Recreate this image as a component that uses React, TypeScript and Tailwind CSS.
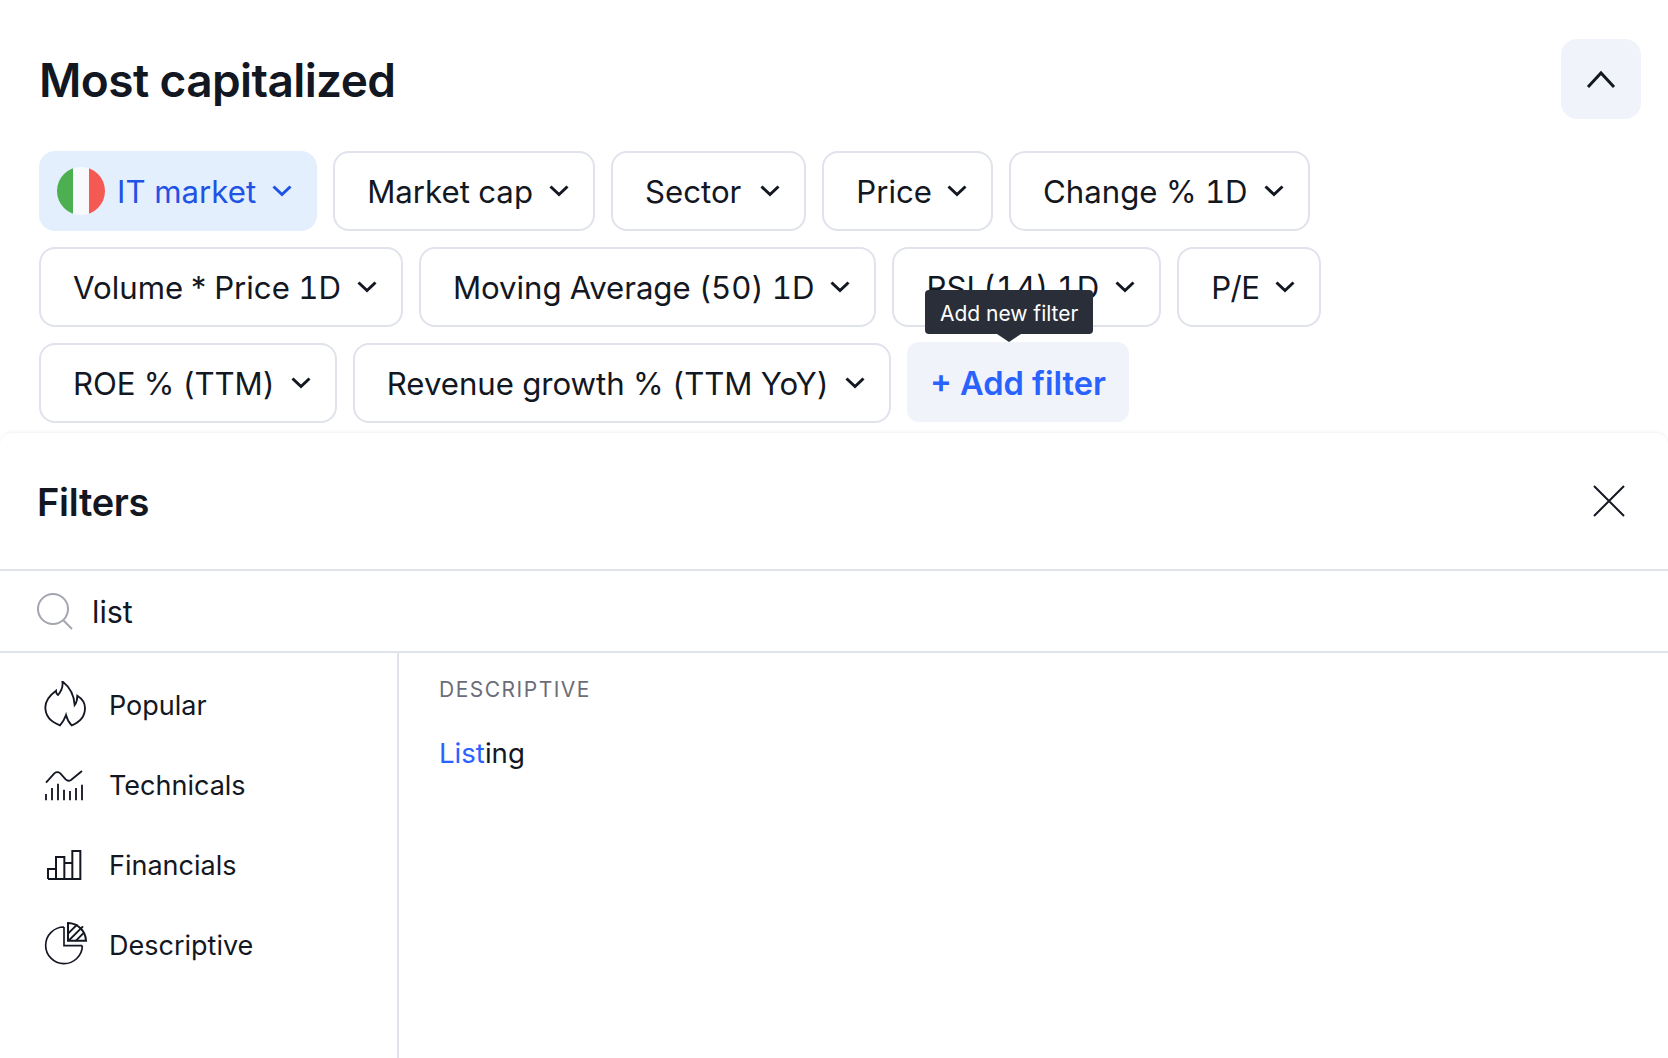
import type { ReactNode } from 'react';

const row: ReactNode[] = [
  'Market cap',
  <span className="pr-[3px]">Sector</span>,
  <span className="-mr-[1px]">Price</span>,
  'Change % 1D',
  <>
    Volume <span className="-mx-[3px]">*</span> Price 1D
  </>,
  <span className="tracking-[-0.05px]">Moving Average (50) 1D</span>,
  'RSI (14) 1D',
  <span className="tracking-[-0.6px]">P/E</span>,
  <span className="tracking-[-0.1px]">ROE % (TTM)</span>,
  <span className="tracking-[-0.03px]">Revenue growth % (TTM YoY)</span>,
];

function ChevronDown({ className }: { className: string }) {
  return (
    <svg viewBox="0 0 28 28" fill="none" className={`w-7 h-7 ${className}`}>
      <path d="M5.5 9.5 14 17.5l8.500-8" stroke="currentColor" strokeWidth="3" />
    </svg>
  );
}

function Chip({ label }: { label: ReactNode }) {
  return (
    <div className="flex items-center h-20 pl-8 pr-5 gap-3 rounded-2xl border-2 border-[#e0e3eb] bg-white text-[#131722] text-[31.2px] tabular-nums whitespace-nowrap">
      <span className="pt-0.5">{label}</span>
      <ChevronDown className="text-[#131722]" />
    </div>
  );
}

function FlameIcon() {
  return (
    <svg viewBox="123 126 144 144" fill="none" stroke="#131722" strokeWidth="5.500" className="w-12 h-12">
      <path d="M187 127C205 141 222 165 224 198 230 190 232 180 232 170 248 180 255 195 255 207 255 232 238 250 215 259 206 250 201 240 198 228 194 240 188 250 180 259 155 250 136 232 136 205 136 185 150 168 168 155 168 160 170 165 174 168 184 156 190 142 187 127z" />
    </svg>
  );
}

function TechnicalsIcon() {
  return (
    <svg viewBox="123 366 144 144" fill="none" stroke="#131722" strokeWidth="5.500" className="w-12 h-12">
      <path d="M138 431l25-28c6-5 12-5 18 0l16 18c6 6 10 6 16 2l33-27" />
      <path d="M138 484v-19M156 484v-37M174 484v-50M192 484v-32M210 484v-28M228 484v-37M246 484v-47" />
    </svg>
  );
}

function FinancialsIcon() {
  return (
    <svg viewBox="123 606 144 144" fill="none" stroke="#131722" strokeWidth="6" className="w-12 h-12">
      <path d="M144 720V690H168V654H193V720M144 720H241V636H217V720M193 672H217M168 690V720" />
    </svg>
  );
}

function DescriptiveIcon() {
  return (
    <svg viewBox="123 846 144 144" fill="none" stroke="#131722" strokeWidth="5" className="w-12 h-12">
      <path d="M192 864a55 55 0 1 0 55 56M192 864v56h55" />
      <path d="M204 852v53h54a55 55 0 0 0-54-53z" strokeWidth="6" />
      <path d="M204 884l28-28M206 905l43-43M228 905l24-24" strokeWidth="6" />
    </svg>
  );
}

function SideItem({ icon, label }: { icon: ReactNode; label: string }) {
  return (
    <div className="flex items-center h-20 pl-[41px] gap-[20px] text-[27px] text-[#131722]">
      {icon}
      <span className="pt-0.5">{label}</span>
    </div>
  );
}

export default function App() {
  return (
    <div className="w-[1668px] h-[1058px] overflow-hidden bg-white font-['Inter',sans-serif] text-[#131722]">
      <div className="pl-[39px] pr-[27px] pt-[39px]">
        <div className="flex items-center justify-between h-20">
          <h1 className="pt-0.5 text-[46px] font-semibold tracking-[-0.6px]">Most capitalized</h1>
          <button className="flex items-center justify-center w-20 h-20 rounded-2xl bg-[#f0f3fa]">
            <svg viewBox="0 0 32 20" fill="none" className="w-8 h-5">
              <path d="M3 18 16 4l13 14" stroke="#131722" strokeWidth="3" />
            </svg>
          </button>
        </div>

        <div className="flex flex-wrap gap-4 w-[1500px] mt-[32px]">
          <div className="flex items-center h-20 pl-[18px] pr-[21px] rounded-2xl bg-[#e3effd] text-[#1e53e5] text-[31.2px] whitespace-nowrap">
            <div className="flex w-12 h-12 rounded-full overflow-hidden mr-3">
              <div className="flex-1 bg-[#4caf50]" />
              <div className="flex-1 bg-[#f8f9fd]" />
              <div className="flex-1 bg-[#f45a53]" />
            </div>
            <span className="pt-0.5">IT market</span>
            <ChevronDown className="ml-3" />
          </div>

          {row.map((label, index) => (
            <Chip key={index} label={label} />
          ))}

          <div className="relative flex items-center h-20 px-[23px] -mt-px rounded-xl bg-[#f0f3fa] text-[#2962ff] text-[32.6px] font-semibold whitespace-nowrap">
            <span className="pt-0.5">+ Add filter</span>
            <div className="absolute left-[18px] -top-[52px] flex items-center h-11 px-[15px] rounded-[4px] bg-[#2a2e39] text-white text-[21px] font-normal">
              <span className="pt-1">Add new filter</span>
              <div className="absolute left-[72px] -bottom-2 w-0 h-0 border-x-[12px] border-x-transparent border-t-8 border-t-[#2a2e39]" />
            </div>
          </div>
        </div>
      </div>

      <div className="mt-[10px] rounded-t-xl bg-white shadow-[0_-1px_3px_rgba(0,0,0,0.06)]">
        <div className="flex items-center justify-between h-[138px] pl-[37px] pr-[41px] border-b-2 border-[#e0e3eb]">
          <h2 className="pt-0.5 text-[38px] font-semibold tracking-[-0.3px]">Filters</h2>
          <svg viewBox="0 0 36 36" fill="none" className="w-9 h-9">
            <path d="M3 3l30 30M33 3 3 33" stroke="#131722" strokeWidth="2" />
          </svg>
        </div>

        <div className="flex items-center h-[82px] pl-[36px] border-b-2 border-[#e0e3eb]">
          <svg viewBox="0 0 38 38" fill="none" className="w-[38px] h-[38px]">
            <circle cx="17" cy="17" r="15" stroke="#a3a6af" strokeWidth="2" />
            <path d="M27 28l9 9" stroke="#a3a6af" strokeWidth="2" />
          </svg>
          <span className="ml-[18px] pt-0.5 text-[30.5px]">list</span>
        </div>

        <div className="flex h-[405px]">
          <div className="w-[399px] pt-3 border-r-2 border-[#e0e3eb]">
            <SideItem icon={<FlameIcon />} label="Popular" />
            <SideItem icon={<TechnicalsIcon />} label="Technicals" />
            <SideItem icon={<FinancialsIcon />} label="Financials" />
            <SideItem icon={<DescriptiveIcon />} label="Descriptive" />
          </div>
          <div className="flex-1 pl-[40px] pt-[21px]">
            <div className="text-[21px] tracking-[1.5px] text-[#6a6d78]">DESCRIPTIVE</div>
            <div className="mt-[27px] text-[27.6px]">
              <span className="text-[#2962ff]">List</span>ing
            </div>
          </div>
        </div>
      </div>
    </div>
  );
}
